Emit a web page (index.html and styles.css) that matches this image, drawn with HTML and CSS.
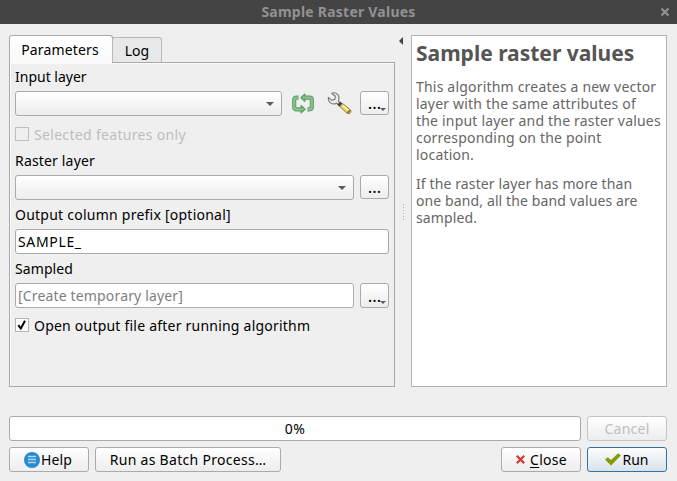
FILE: index.html
```html
<!DOCTYPE html>
<html lang="en">
<head>
<meta charset="utf-8">
<title>Sample Raster Values</title>
<link rel="stylesheet" href="styles.css">
</head>
<body>
<header class="titlebar">
  <span class="title">Sample Raster Values</span>
  <svg class="win-close" width="10" height="10" viewBox="0 0 10 10"><path d="M1.500 1.500l7 7M8.500 1.500l-7 7" stroke="#929292" stroke-width="2.200"/></svg>
</header>
<main class="body">
  <section class="left">
    <nav class="tabs">
      <div class="tab active">Parameters</div>
      <div class="tab log">Log</div>
    </nav>
    <div class="pane">
      <label class="label">Input layer</label>
      <div class="row">
        <div class="combo"><i class="arrow"></i></div>
        <svg class="iterate" width="24" height="22" viewBox="0 0 24 22">
          <g fill="none" stroke-linejoin="round">
            <path d="M10.500 17.300H5.500Q3.200 17.300 3.200 15V8Q3.200 5.700 5.500 5.700H7.500M13.500 5.700H18.500Q20.800 5.700 20.800 8V15Q20.800 17.300 18.500 17.300H16.500" stroke="#5b9e63" stroke-width="4.200"/>
            <path d="M13.800 2.200L10 5.700L13.800 9.200ZM10.200 13.800L14 17.300L10.200 20.800Z" fill="#8bc190" stroke="#5b9e63" stroke-width="1.400"/>
            <path d="M11 17.300H5.500Q3.200 17.300 3.200 15V8Q3.200 5.700 5.500 5.700H7M13 5.700H18.500Q20.800 5.700 20.800 8V15Q20.800 17.300 18.500 17.300H17" stroke="#8bc190" stroke-width="2.200"/>
          </g>
        </svg>
        <svg class="wrench" width="26" height="24" viewBox="0 0 26 24">
          <path d="M12.300 10.200L15.300 12.800L13.300 14.800L10.600 12.200Q6.800 14.100 3.800 11.300Q1.800 9.300 2.300 6.400L5.800 9.300L9 8.300L9.300 5.200L5.700 2.300Q9.200.900 11.600 3.300Q14.100 6 12.300 10.200Z" fill="#e9ebe8" stroke="#747773" stroke-width="1.100" stroke-linejoin="round"/>
          <path d="M14.300 10.500l2.200 2-3 3.200-2.300-2.200z" fill="#444743"/>
          <path d="M16.400 12.400l7.900 6.300q1.400 1.300.1 3t-3.200.6l-7.300-6.700z" fill="#efd66c" stroke="#8d7b3b"/>
          <path d="M16.800 14.500l6.200 5" stroke="#fff0a8" stroke-width="1.200"/>
          <path d="M24.200 19.100l-3 3" stroke="#927e42" stroke-width="2"/>
        </svg>
        <div class="more short">…<i class="mini"></i></div>
      </div>
      <div class="check disabled"><span class="box"></span><span class="caption">Selected features only</span></div>
      <label class="label raster">Raster layer</label>
      <div class="row">
        <div class="combo"><i class="arrow"></i></div>
        <div class="more short">…</div>
      </div>
      <label class="label prefix">Output column prefix [optional]</label>
      <div class="field sample">SAMPLE_</div>
      <label class="label sampled">Sampled</label>
      <div class="row">
        <div class="field placeholder">[Create temporary layer]</div>
        <div class="more">…<i class="mini"></i></div>
      </div>
      <div class="check open"><span class="box"><svg width="12" height="12" viewBox="0 0 12 12"><path d="M2.300 6.200l2.500 3.300L9 1.800" fill="none" stroke="#000" stroke-width="2"/></svg></span><span class="caption">Open output file after running algorithm</span></div>
    </div>
  </section>
  <div class="splitter">
    <svg class="collapse" width="4" height="8" viewBox="0 0 4 8"><path d="M4 0v8L0 4z" fill="#444"/></svg>
    <i class="grip"></i>
  </div>
  <article class="help-panel">
    <h1>Sample raster values</h1>
    <p>This algorithm creates a new vector<br>layer with the same attributes of<br>the input layer and the raster values<br>corresponding on the point<br>location.</p>
    <p class="second">If the raster layer has more than<br>one band, all the band values are<br>sampled.</p>
  </article>
</main>
<footer class="footer">
  <div class="frow">
    <div class="progress">0%</div>
    <div class="btn cancel">Cancel</div>
  </div>
  <div class="frow">
    <div class="btn help"><svg width="16" height="16" viewBox="0 0 16 16"><circle cx="8" cy="8" r="8" fill="#268bd2"/><path d="M4 4.500h8M4 7.500h8M4 10.500h8" stroke="#b5d8f0" stroke-width="1.300"/></svg><span>Help</span></div>
    <div class="btn batch">Run as Batch Process…</div>
    <div class="spacer"></div>
    <div class="btn close"><svg width="9" height="9" viewBox="0 0 8 8"><path d="M.7.700l6.600 6.600M7.300.700L.7 7.300" stroke="#dc322f" stroke-width="1.900"/></svg><span><u>C</u>lose</span></div>
    <div class="btn run"><svg width="16" height="13" viewBox="0 0 16 13"><path d="M0 6.500L2.800 4.200L6 7L13.200.300L15.800 2.600L6 12.500Z" fill="#859900"/></svg><span>Run</span></div>
  </div>
</footer>
</body>
</html>
```
FILE: styles.css
```css
* { box-sizing: border-box; }

body {
  margin: 0;
  width: 677px;
  height: 481px;
  overflow: hidden;
  background: #efefef;
  color: #000;
  font: 14px/20px "Noto Sans", "Open Sans", sans-serif;
  white-space: nowrap;
}

.titlebar {
  position: relative;
  height: 24px;
  background: #444;
  color: #929292;
  text-align: center;
  font-weight: bold;
  line-height: 24px;
  letter-spacing: .23px;
}
.win-close { position: absolute; left: 660px; top: 7px; }

.body { display: flex; height: 363px; padding: 11px 10px 0 9px; }
.left { width: 386px; display: flex; flex-direction: column; }

.tabs { display: flex; align-items: flex-end; height: 28px; position: relative; z-index: 1; }
.tab {
  border: 1px solid #aaa;
  border-radius: 3px 3px 0 0;
  text-align: center;
}
.tab.active {
  width: 104px;
  height: 28px;
  padding-right: 2px;
  border-bottom: 0;
  background: linear-gradient(#fff, #fafafa);
  line-height: 28px;
  letter-spacing: .14px;
}
.tab.log {
  width: 50px;
  height: 26px;
  margin-left: -1px;
  border-color: #b9b9b9 #b9b9b9 #aaa;
  background: #e8e8e8;
  line-height: 25px;
}

.pane {
  height: 325px;
  margin-top: -1px;
  padding: 4px 5px 0;
  border: 1px solid #aaa;
  box-shadow: inset 1px 1px #fafafa;
}
.label { display: block; height: 20px; margin-bottom: 4px; }
.raster { margin-top: 7px; letter-spacing: .17px; }
.prefix { margin-top: 5px; letter-spacing: .24px; }
.sampled { margin-top: 5px; letter-spacing: .09px; }

.row { display: flex; height: 25px; }
.combo, .field, .more, .progress, .btn {
  height: 25px;
  border: 1px solid #aaa;
  border-radius: 3px;
}
.combo {
  flex: 1;
  display: flex;
  justify-content: flex-end;
  align-items: center;
  padding-right: 7px;
  background: linear-gradient(#fff, #ededed);
}
.arrow {
  border: 4px solid transparent;
  border-top-color: #5a5a5a;
  border-bottom: 0;
}
.iterate { margin: 1px 0 0 9px; }
.wrench { margin-left: 11px; }
.more {
  position: relative;
  width: 29px;
  margin-left: 6px;
  background: linear-gradient(#fff, #ededed);
  text-align: center;
  line-height: 23px;
  font-size: 17px;
}
.wrench + .more { margin-left: 8px; }
.more.short { height: 24px; line-height: 22px; }
.mini {
  position: absolute;
  right: 2px;
  bottom: 3px;
  border: 3px solid transparent;
  border-top-color: #5a5a5a;
  border-bottom: 0;
}

.check { display: flex; align-items: center; height: 20px; }
.box { width: 14px; height: 14px; margin-right: 5px; border: 1px solid #b4b4b4; background: #fff; }
.box svg { display: block; }
.caption { padding-top: 2px; }
.disabled { margin-top: 8px; color: #bebebe; letter-spacing: .32px; }
.disabled .box { background: #efefef; border-color: #bebebe; }
.open { margin-top: 7px; letter-spacing: .22px; }

.field { padding-left: 2px; background: #fff; line-height: 24px; }
.sample { letter-spacing: .65px; }
.placeholder { flex: 1; color: #808080; letter-spacing: .16px; }

.splitter { width: 16px; display: flex; flex-direction: column; align-items: flex-start; padding: 2px 0 0 4px; }
.grip {
  width: 1px;
  height: 17px;
  margin: 159px 0 0 4px;
  background: repeating-linear-gradient(#b0b0b0 0 1px, transparent 1px 3px);
}

.help-panel {
  width: 256px;
  height: 352px;
  padding: 5px 4px;
  border: 1px solid #b4b4b4;
  background: #fff;
  color: #666;
}
h1 { margin: 0 0 12px; color: #555; font-size: 21px; line-height: 25px; }
p { margin: 0 0 12px; line-height: 17px; letter-spacing: .195px; }
.second { letter-spacing: .115px; }

.footer { display: flex; flex-direction: column; gap: 6px; padding: 29px 10px 0 9px; }
.frow { display: flex; gap: 6px; }
.progress { width: 572px; background: #fff; text-align: center; line-height: 24px; letter-spacing: .5px; }
.btn {
  display: flex;
  align-items: center;
  justify-content: center;
  width: 80px;
  background: linear-gradient(#fff, #ededed);
}
.cancel { color: #bebebe; border-color: #c4c4c4; letter-spacing: .23px; }
.help { gap: 1px; padding-right: 2px; letter-spacing: .12px; }
.batch { width: 186px; letter-spacing: .29px; }
.spacer { flex: 1; }
.close { gap: 5px; padding-left: 1px; letter-spacing: .29px; }
.close svg { margin-top: -1px; }
.close u { text-underline-offset: 2px; }
.run { gap: 1px; border-color: #30749e; background: linear-gradient(#fdfdfe, #d9e2ea); }
```
